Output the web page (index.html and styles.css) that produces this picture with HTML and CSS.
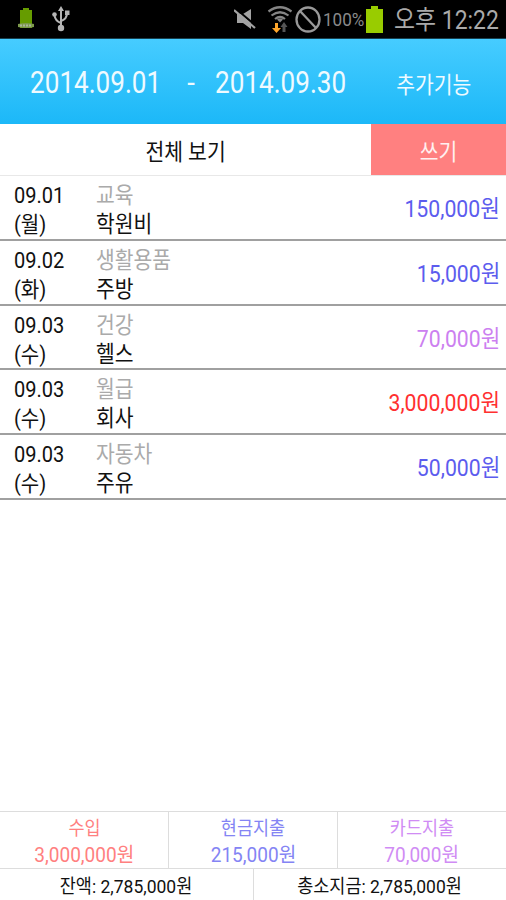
FILE: index.html
```
<!DOCTYPE html>
<html lang="ko">

<head>
    <meta charset="UTF-8">
    <meta name="viewport" content="width=device-width, initial-scale=1.0">
    <title>가계부</title>
    <link rel="stylesheet" href="styles.css">
</head>

<body>
    <div class="status-bar">
        <div class="status-left">
            <svg class="icon-app" width="18" height="24" viewBox="0 0 18 24">
                <path d="M6 1h6v2h3v18H3V3h3z" fill="#669c00" />
                <path d="M1 17q8-2 16 0v3q-8 2-16 0z" fill="#7d9a4c" />
                <path d="M3 18.500h12" stroke="#a9b59a" stroke-width="2" stroke-dasharray="2 1" />
            </svg>
            <svg class="icon-usb" width="18" height="26" viewBox="0 0 18 26">
                <path d="M9 3v20M9 17Q3 15 2.500 9M9 15q6-2 6-8" fill="none" stroke="#b5b5b5" stroke-width="2" />
                <path d="M9 0l3 5H6z" fill="#b5b5b5" />
                <circle cx="9" cy="22" r="3.2" fill="#b5b5b5" />
                <circle cx="2.500" cy="8.500" r="2.300" fill="#b5b5b5" />
                <path d="M13 4.500h4.500v4.500H13z" fill="#b5b5b5" />
            </svg>
        </div>
        <div class="status-right">
            <svg class="icon-mute" width="23" height="23" viewBox="0 0 23 23">
                <path d="M3 6h6l8-5v20l-8-6H3z" fill="#a3a3a3" />
                <path d="M1.500 0.500l20 17" stroke="#000" stroke-width="2" />
                <path d="M0 2l21 18" stroke="#a3a3a3" stroke-width="2.200" />
            </svg>
            <svg class="icon-wifi" width="26" height="29" viewBox="0 0 26 29">
                <g fill="none" stroke="#858585" stroke-width="2.200">
                    <path d="M1.500 6.500Q13-2 24.500 6.500" />
                    <path d="M4.500 10.500Q13 4 21.500 10.500" />
                    <path d="M8 14Q13 10 18 14" />
                </g>
                <path d="M10 14.500q3-2 6 0l-3 3z" fill="#858585" />
                <path d="M8 18h3v5h3l-4.500 5L5 23h3z" fill="#ffa62b" />
                <path d="M15.500 27v-5H13.500l3.500-5 3.500 5H18.500v5z" fill="#555" />
            </svg>
            <svg class="icon-block" width="26" height="27" viewBox="0 0 26 27">
                <ellipse cx="13" cy="13.500" rx="11.500" ry="12" fill="none" stroke="#999" stroke-width="2.300" />
                <path d="M5 5l16 17" stroke="#999" stroke-width="2.300" />
            </svg>
            <span class="percent narrow">100%</span>
            <svg class="icon-battery" width="17" height="27" viewBox="0 0 17 27">
                <path d="M5 0h7v3h5v24H0V3h5z" fill="#99cc00" />
            </svg>
            <span class="clock narrow">오후 12:22</span>
        </div>
    </div>

    <div class="header">
        <div class="date from"><span class="narrow">2014.09.01</span></div>
        <div class="dash"><span class="narrow">-</span></div>
        <div class="date to"><span class="narrow">2014.09.30</span></div>
        <div class="more"><span class="narrow">추가기능</span></div>
    </div>

    <div class="tabs">
        <div class="view-all"><span class="narrow">전체 보기</span></div>
        <div class="write"><span class="narrow">쓰기</span></div>
    </div>

    <div class="list">
        <div class="item">
            <div class="day"><span>09.01</span><span>(월)</span></div>
            <div class="info"><span class="category">교육</span><span class="memo">학원비</span></div>
            <div class="amount cash">150,000원</div>
        </div>
        <div class="item">
            <div class="day"><span>09.02</span><span>(화)</span></div>
            <div class="info"><span class="category">생활용품</span><span class="memo">주방</span></div>
            <div class="amount cash">15,000원</div>
        </div>
        <div class="item">
            <div class="day"><span>09.03</span><span>(수)</span></div>
            <div class="info"><span class="category">건강</span><span class="memo">헬스</span></div>
            <div class="amount card">70,000원</div>
        </div>
        <div class="item">
            <div class="day"><span>09.03</span><span>(수)</span></div>
            <div class="info"><span class="category">월급</span><span class="memo">회사</span></div>
            <div class="amount income">3,000,000원</div>
        </div>
        <div class="item">
            <div class="day"><span>09.03</span><span>(수)</span></div>
            <div class="info"><span class="category">자동차</span><span class="memo">주유</span></div>
            <div class="amount cash">50,000원</div>
        </div>
    </div>

    <div class="summary">
        <div class="sum sum-income">
            <span class="narrow label">수입</span>
            <span class="narrow">3,000,000원</span>
        </div>
        <div class="sum sum-cash">
            <span class="narrow label">현금지출</span>
            <span class="narrow">215,000원</span>
        </div>
        <div class="sum sum-card">
            <span class="narrow label">카드지출</span>
            <span class="narrow">70,000원</span>
        </div>
    </div>
    <div class="totals">
        <div class="total"><span class="narrow">잔액: 2,785,000원</span></div>
        <div class="total"><span class="narrow">총소지금: 2,785,000원</span></div>
    </div>
</body>

</html>
```

FILE: styles.css
```
* {
    margin: 0;
    padding: 0;
    box-sizing: border-box;
}

body {
    width: 506px;
    height: 900px;
    display: flex;
    flex-direction: column;
    overflow: hidden;
    background-color: white;
    color: #111;
    font-family: Roboto, "Noto Sans CJK KR", sans-serif;
    font-size: 22.2px;
    white-space: nowrap;
}

svg {
    display: block;
    flex-shrink: 0;
}

/* condensed lettering */
.narrow {
    display: inline-block;
    transform: scaleX(0.92);
}

.status-bar {
    height: 39px;
    flex-shrink: 0;
    display: flex;
    justify-content: space-between;
    background-color: black;
    border-bottom: 1px solid #164050;
}

.status-left,
.status-right {
    display: flex;
    align-items: center;
}

.status-left {
    padding-left: 17px;
    gap: 17px;
}

.status-right {
    width: 272px;
}

.icon-wifi {
    margin-left: 10px;
}

.icon-block {
    margin-left: 2px;
}

.percent {
    width: 44px;
    margin-left: 2px;
    font-size: 19px;
    color: #8a8a8a;
    transform: scaleX(0.9);
    transform-origin: left;
}

.icon-battery {
    margin-left: -1px;
}

.clock {
    margin: 0 0 3px 11px;
    font-size: 26px;
    color: #aaa;
    transform: scaleX(0.88);
    transform-origin: left;
}

.header {
    height: 85px;
    flex-shrink: 0;
    display: flex;
    align-items: center;
    padding-top: 2px;
    background: linear-gradient(#46ccff, #1cb8f8);
    color: #effaff;
    text-align: center;
}

.header div {
    display: flex;
    justify-content: center;
}

.date {
    font-size: 30.5px;
}

.date .narrow {
    transform: scaleX(0.855);
}

.from {
    width: 191px;
}

.dash {
    width: 0;
    font-size: 30px;
}

.to {
    width: 179px;
}

.more {
    width: 127px;
}

.tabs {
    height: 52px;
    flex-shrink: 0;
    display: flex;
    border-bottom: 1px solid #e8e8e8;
}

.view-all,
.write {
    display: flex;
    align-items: center;
    justify-content: center;
}

.view-all {
    width: 371px;
}

.write {
    flex: 1;
    background-color: #ff8080;
    color: #fff0f0;
}

.list {
    flex: 1;
}

.item {
    height: 64.8px;
    display: flex;
    padding: 5px 6px 0 14px;
    border-bottom: 2px solid #a0a0a0;
}

.day,
.info {
    display: flex;
    flex-direction: column;
    line-height: 29px;
}

.day {
    width: 82px;
    font-size: 21.8px;
}

.day span,
.info span {
    transform: scaleX(0.92);
    transform-origin: left;
}

.category {
    color: #aaa;
}

.amount {
    margin-left: auto;
    font-size: 24px;
    line-height: 57px;
    transform: scaleX(0.885);
    transform-origin: right;
}

.cash {
    color: #5c5cee;
}

.card {
    color: #cc80f0;
}

.income {
    color: #ff3030;
}

.summary {
    height: 57px;
    flex-shrink: 0;
    display: flex;
    border-top: 1px solid #ddd;
}

.sum {
    flex: 1;
    display: flex;
    flex-direction: column;
    align-items: center;
    padding-top: 4px;
    font-size: 20.7px;
    line-height: 26px;
}

.sum + .sum,
.total + .total {
    border-left: 1px solid #ddd;
}

.label {
    font-size: 19px;
}

.sum-income {
    color: #ff8080;
}

.sum-cash {
    color: #8484f4;
}

.sum-card {
    color: #d08cf4;
}

.totals {
    height: 32px;
    flex-shrink: 0;
    display: flex;
    border-top: 1px solid #ddd;
}

.total {
    flex: 1;
    display: flex;
    align-items: center;
    justify-content: center;
    font-size: 19px;
}
```
